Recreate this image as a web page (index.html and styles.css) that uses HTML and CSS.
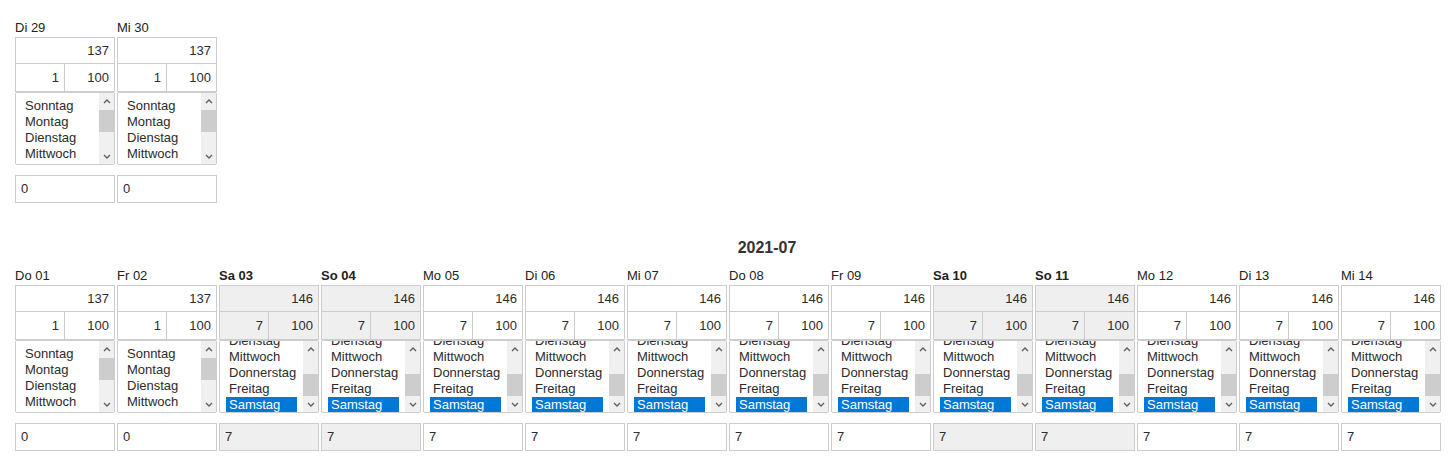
FILE: index.html
```html
<!DOCTYPE html>
<html>
<head>
  <title>Kontingente</title>
  <meta charset="UTF-8">
  <link rel="stylesheet" href="styles.css">
</head>
<body>
  <div class="days">
    <div class="day">
      <div class="day-label">Di 29</div>
      <div class="quota">
        <div class="q-total">137</div>
        <div class="q-cell">1</div>
        <div class="q-cell">100</div>
      </div>
      <div class="listbox">
        <div class="options">
          <div class="option">Sonntag</div>
          <div class="option">Montag</div>
          <div class="option">Dienstag</div>
          <div class="option">Mittwoch</div>
          <div class="option">Donnerstag</div>
          <div class="option">Freitag</div>
          <div class="option">Samstag</div>
        </div>
        <div class="scrollbar">
          <div class="arrow"><svg width="8" height="6" viewBox="0 0 8 6"><polyline points="1,5 4,2 7,5"/></svg></div>
          <div class="thumb"></div>
          <div class="arrow down"><svg width="8" height="6" viewBox="0 0 8 6"><polyline points="1,1 4,4 7,1"/></svg></div>
        </div>
      </div>
      <div class="field">0</div>
    </div>
    <div class="day">
      <div class="day-label">Mi 30</div>
      <div class="quota">
        <div class="q-total">137</div>
        <div class="q-cell">1</div>
        <div class="q-cell">100</div>
      </div>
      <div class="listbox">
        <div class="options">
          <div class="option">Sonntag</div>
          <div class="option">Montag</div>
          <div class="option">Dienstag</div>
          <div class="option">Mittwoch</div>
          <div class="option">Donnerstag</div>
          <div class="option">Freitag</div>
          <div class="option">Samstag</div>
        </div>
        <div class="scrollbar">
          <div class="arrow"><svg width="8" height="6" viewBox="0 0 8 6"><polyline points="1,5 4,2 7,5"/></svg></div>
          <div class="thumb"></div>
          <div class="arrow down"><svg width="8" height="6" viewBox="0 0 8 6"><polyline points="1,1 4,4 7,1"/></svg></div>
        </div>
      </div>
      <div class="field">0</div>
    </div>
  </div>

  <div class="month-title">2021-07</div>

  <div class="days">
    <div class="day">
      <div class="day-label">Do 01</div>
      <div class="quota">
        <div class="q-total">137</div>
        <div class="q-cell">1</div>
        <div class="q-cell">100</div>
      </div>
      <div class="listbox">
        <div class="options">
          <div class="option">Sonntag</div>
          <div class="option">Montag</div>
          <div class="option">Dienstag</div>
          <div class="option">Mittwoch</div>
          <div class="option">Donnerstag</div>
          <div class="option">Freitag</div>
          <div class="option">Samstag</div>
        </div>
        <div class="scrollbar">
          <div class="arrow"><svg width="8" height="6" viewBox="0 0 8 6"><polyline points="1,5 4,2 7,5"/></svg></div>
          <div class="thumb"></div>
          <div class="arrow down"><svg width="8" height="6" viewBox="0 0 8 6"><polyline points="1,1 4,4 7,1"/></svg></div>
        </div>
      </div>
      <div class="field">0</div>
    </div>
    <div class="day">
      <div class="day-label">Fr 02</div>
      <div class="quota">
        <div class="q-total">137</div>
        <div class="q-cell">1</div>
        <div class="q-cell">100</div>
      </div>
      <div class="listbox">
        <div class="options">
          <div class="option">Sonntag</div>
          <div class="option">Montag</div>
          <div class="option">Dienstag</div>
          <div class="option">Mittwoch</div>
          <div class="option">Donnerstag</div>
          <div class="option">Freitag</div>
          <div class="option">Samstag</div>
        </div>
        <div class="scrollbar">
          <div class="arrow"><svg width="8" height="6" viewBox="0 0 8 6"><polyline points="1,5 4,2 7,5"/></svg></div>
          <div class="thumb"></div>
          <div class="arrow down"><svg width="8" height="6" viewBox="0 0 8 6"><polyline points="1,1 4,4 7,1"/></svg></div>
        </div>
      </div>
      <div class="field">0</div>
    </div>
    <div class="day weekend">
      <div class="day-label">Sa 03</div>
      <div class="quota">
        <div class="q-total">146</div>
        <div class="q-cell">7</div>
        <div class="q-cell">100</div>
      </div>
      <div class="listbox scrolled">
        <div class="options">
          <div class="option">Sonntag</div>
          <div class="option">Montag</div>
          <div class="option">Dienstag</div>
          <div class="option">Mittwoch</div>
          <div class="option">Donnerstag</div>
          <div class="option">Freitag</div>
          <div class="option selected">Samstag</div>
        </div>
        <div class="scrollbar">
          <div class="arrow"><svg width="8" height="6" viewBox="0 0 8 6"><polyline points="1,5 4,2 7,5"/></svg></div>
          <div class="thumb"></div>
          <div class="arrow down"><svg width="8" height="6" viewBox="0 0 8 6"><polyline points="1,1 4,4 7,1"/></svg></div>
        </div>
      </div>
      <div class="field">7</div>
    </div>
    <div class="day weekend">
      <div class="day-label">So 04</div>
      <div class="quota">
        <div class="q-total">146</div>
        <div class="q-cell">7</div>
        <div class="q-cell">100</div>
      </div>
      <div class="listbox scrolled">
        <div class="options">
          <div class="option">Sonntag</div>
          <div class="option">Montag</div>
          <div class="option">Dienstag</div>
          <div class="option">Mittwoch</div>
          <div class="option">Donnerstag</div>
          <div class="option">Freitag</div>
          <div class="option selected">Samstag</div>
        </div>
        <div class="scrollbar">
          <div class="arrow"><svg width="8" height="6" viewBox="0 0 8 6"><polyline points="1,5 4,2 7,5"/></svg></div>
          <div class="thumb"></div>
          <div class="arrow down"><svg width="8" height="6" viewBox="0 0 8 6"><polyline points="1,1 4,4 7,1"/></svg></div>
        </div>
      </div>
      <div class="field">7</div>
    </div>
    <div class="day">
      <div class="day-label">Mo 05</div>
      <div class="quota">
        <div class="q-total">146</div>
        <div class="q-cell">7</div>
        <div class="q-cell">100</div>
      </div>
      <div class="listbox scrolled">
        <div class="options">
          <div class="option">Sonntag</div>
          <div class="option">Montag</div>
          <div class="option">Dienstag</div>
          <div class="option">Mittwoch</div>
          <div class="option">Donnerstag</div>
          <div class="option">Freitag</div>
          <div class="option selected">Samstag</div>
        </div>
        <div class="scrollbar">
          <div class="arrow"><svg width="8" height="6" viewBox="0 0 8 6"><polyline points="1,5 4,2 7,5"/></svg></div>
          <div class="thumb"></div>
          <div class="arrow down"><svg width="8" height="6" viewBox="0 0 8 6"><polyline points="1,1 4,4 7,1"/></svg></div>
        </div>
      </div>
      <div class="field">7</div>
    </div>
    <div class="day">
      <div class="day-label">Di 06</div>
      <div class="quota">
        <div class="q-total">146</div>
        <div class="q-cell">7</div>
        <div class="q-cell">100</div>
      </div>
      <div class="listbox scrolled">
        <div class="options">
          <div class="option">Sonntag</div>
          <div class="option">Montag</div>
          <div class="option">Dienstag</div>
          <div class="option">Mittwoch</div>
          <div class="option">Donnerstag</div>
          <div class="option">Freitag</div>
          <div class="option selected">Samstag</div>
        </div>
        <div class="scrollbar">
          <div class="arrow"><svg width="8" height="6" viewBox="0 0 8 6"><polyline points="1,5 4,2 7,5"/></svg></div>
          <div class="thumb"></div>
          <div class="arrow down"><svg width="8" height="6" viewBox="0 0 8 6"><polyline points="1,1 4,4 7,1"/></svg></div>
        </div>
      </div>
      <div class="field">7</div>
    </div>
    <div class="day">
      <div class="day-label">Mi 07</div>
      <div class="quota">
        <div class="q-total">146</div>
        <div class="q-cell">7</div>
        <div class="q-cell">100</div>
      </div>
      <div class="listbox scrolled">
        <div class="options">
          <div class="option">Sonntag</div>
          <div class="option">Montag</div>
          <div class="option">Dienstag</div>
          <div class="option">Mittwoch</div>
          <div class="option">Donnerstag</div>
          <div class="option">Freitag</div>
          <div class="option selected">Samstag</div>
        </div>
        <div class="scrollbar">
          <div class="arrow"><svg width="8" height="6" viewBox="0 0 8 6"><polyline points="1,5 4,2 7,5"/></svg></div>
          <div class="thumb"></div>
          <div class="arrow down"><svg width="8" height="6" viewBox="0 0 8 6"><polyline points="1,1 4,4 7,1"/></svg></div>
        </div>
      </div>
      <div class="field">7</div>
    </div>
    <div class="day">
      <div class="day-label">Do 08</div>
      <div class="quota">
        <div class="q-total">146</div>
        <div class="q-cell">7</div>
        <div class="q-cell">100</div>
      </div>
      <div class="listbox scrolled">
        <div class="options">
          <div class="option">Sonntag</div>
          <div class="option">Montag</div>
          <div class="option">Dienstag</div>
          <div class="option">Mittwoch</div>
          <div class="option">Donnerstag</div>
          <div class="option">Freitag</div>
          <div class="option selected">Samstag</div>
        </div>
        <div class="scrollbar">
          <div class="arrow"><svg width="8" height="6" viewBox="0 0 8 6"><polyline points="1,5 4,2 7,5"/></svg></div>
          <div class="thumb"></div>
          <div class="arrow down"><svg width="8" height="6" viewBox="0 0 8 6"><polyline points="1,1 4,4 7,1"/></svg></div>
        </div>
      </div>
      <div class="field">7</div>
    </div>
    <div class="day">
      <div class="day-label">Fr 09</div>
      <div class="quota">
        <div class="q-total">146</div>
        <div class="q-cell">7</div>
        <div class="q-cell">100</div>
      </div>
      <div class="listbox scrolled">
        <div class="options">
          <div class="option">Sonntag</div>
          <div class="option">Montag</div>
          <div class="option">Dienstag</div>
          <div class="option">Mittwoch</div>
          <div class="option">Donnerstag</div>
          <div class="option">Freitag</div>
          <div class="option selected">Samstag</div>
        </div>
        <div class="scrollbar">
          <div class="arrow"><svg width="8" height="6" viewBox="0 0 8 6"><polyline points="1,5 4,2 7,5"/></svg></div>
          <div class="thumb"></div>
          <div class="arrow down"><svg width="8" height="6" viewBox="0 0 8 6"><polyline points="1,1 4,4 7,1"/></svg></div>
        </div>
      </div>
      <div class="field">7</div>
    </div>
    <div class="day weekend">
      <div class="day-label">Sa 10</div>
      <div class="quota">
        <div class="q-total">146</div>
        <div class="q-cell">7</div>
        <div class="q-cell">100</div>
      </div>
      <div class="listbox scrolled">
        <div class="options">
          <div class="option">Sonntag</div>
          <div class="option">Montag</div>
          <div class="option">Dienstag</div>
          <div class="option">Mittwoch</div>
          <div class="option">Donnerstag</div>
          <div class="option">Freitag</div>
          <div class="option selected">Samstag</div>
        </div>
        <div class="scrollbar">
          <div class="arrow"><svg width="8" height="6" viewBox="0 0 8 6"><polyline points="1,5 4,2 7,5"/></svg></div>
          <div class="thumb"></div>
          <div class="arrow down"><svg width="8" height="6" viewBox="0 0 8 6"><polyline points="1,1 4,4 7,1"/></svg></div>
        </div>
      </div>
      <div class="field">7</div>
    </div>
    <div class="day weekend">
      <div class="day-label">So 11</div>
      <div class="quota">
        <div class="q-total">146</div>
        <div class="q-cell">7</div>
        <div class="q-cell">100</div>
      </div>
      <div class="listbox scrolled">
        <div class="options">
          <div class="option">Sonntag</div>
          <div class="option">Montag</div>
          <div class="option">Dienstag</div>
          <div class="option">Mittwoch</div>
          <div class="option">Donnerstag</div>
          <div class="option">Freitag</div>
          <div class="option selected">Samstag</div>
        </div>
        <div class="scrollbar">
          <div class="arrow"><svg width="8" height="6" viewBox="0 0 8 6"><polyline points="1,5 4,2 7,5"/></svg></div>
          <div class="thumb"></div>
          <div class="arrow down"><svg width="8" height="6" viewBox="0 0 8 6"><polyline points="1,1 4,4 7,1"/></svg></div>
        </div>
      </div>
      <div class="field">7</div>
    </div>
    <div class="day">
      <div class="day-label">Mo 12</div>
      <div class="quota">
        <div class="q-total">146</div>
        <div class="q-cell">7</div>
        <div class="q-cell">100</div>
      </div>
      <div class="listbox scrolled">
        <div class="options">
          <div class="option">Sonntag</div>
          <div class="option">Montag</div>
          <div class="option">Dienstag</div>
          <div class="option">Mittwoch</div>
          <div class="option">Donnerstag</div>
          <div class="option">Freitag</div>
          <div class="option selected">Samstag</div>
        </div>
        <div class="scrollbar">
          <div class="arrow"><svg width="8" height="6" viewBox="0 0 8 6"><polyline points="1,5 4,2 7,5"/></svg></div>
          <div class="thumb"></div>
          <div class="arrow down"><svg width="8" height="6" viewBox="0 0 8 6"><polyline points="1,1 4,4 7,1"/></svg></div>
        </div>
      </div>
      <div class="field">7</div>
    </div>
    <div class="day">
      <div class="day-label">Di 13</div>
      <div class="quota">
        <div class="q-total">146</div>
        <div class="q-cell">7</div>
        <div class="q-cell">100</div>
      </div>
      <div class="listbox scrolled">
        <div class="options">
          <div class="option">Sonntag</div>
          <div class="option">Montag</div>
          <div class="option">Dienstag</div>
          <div class="option">Mittwoch</div>
          <div class="option">Donnerstag</div>
          <div class="option">Freitag</div>
          <div class="option selected">Samstag</div>
        </div>
        <div class="scrollbar">
          <div class="arrow"><svg width="8" height="6" viewBox="0 0 8 6"><polyline points="1,5 4,2 7,5"/></svg></div>
          <div class="thumb"></div>
          <div class="arrow down"><svg width="8" height="6" viewBox="0 0 8 6"><polyline points="1,1 4,4 7,1"/></svg></div>
        </div>
      </div>
      <div class="field">7</div>
    </div>
    <div class="day">
      <div class="day-label">Mi 14</div>
      <div class="quota">
        <div class="q-total">146</div>
        <div class="q-cell">7</div>
        <div class="q-cell">100</div>
      </div>
      <div class="listbox scrolled">
        <div class="options">
          <div class="option">Sonntag</div>
          <div class="option">Montag</div>
          <div class="option">Dienstag</div>
          <div class="option">Mittwoch</div>
          <div class="option">Donnerstag</div>
          <div class="option">Freitag</div>
          <div class="option selected">Samstag</div>
        </div>
        <div class="scrollbar">
          <div class="arrow"><svg width="8" height="6" viewBox="0 0 8 6"><polyline points="1,5 4,2 7,5"/></svg></div>
          <div class="thumb"></div>
          <div class="arrow down"><svg width="8" height="6" viewBox="0 0 8 6"><polyline points="1,1 4,4 7,1"/></svg></div>
        </div>
      </div>
      <div class="field">7</div>
    </div>
  </div>
</body>
</html>
```

FILE: styles.css
```css
body {
  margin: 0;
  padding: 20px 0 0 15px;
  font-family: "Liberation Sans", Arial, sans-serif;
  font-size: 13px;
  color: #333;
  background: white;
}

.days {
  display: flex;
  gap: 2px;
}

.day {
  width: 100px;
  display: flex;
  flex-direction: column;
}

.day-label {
  height: 16px;
  line-height: 16px;
  margin-bottom: 1px;
  color: #222;
  white-space: nowrap;
}

.weekend .day-label {
  font-weight: bold;
}

.quota {
  display: grid;
  grid-template-columns: 48px 1fr;
  grid-template-rows: 25px 27px;
  gap: 1px;
  border: 1px solid #ccc;
  background: #ccc;
}

.q-total,
.q-cell {
  background: white;
  padding-right: 5px;
  display: flex;
  align-items: center;
  justify-content: flex-end;
  color: #2b2b2b;
}

.q-total {
  grid-column: 1 / 3;
}

.weekend .q-total,
.weekend .q-cell {
  background: #efefef;
}

.listbox {
  display: flex;
  height: 71px;
  border: 1px solid #ccc;
  border-radius: 2px;
  overflow: hidden;
  background: white;
}

.options {
  flex: 1;
  overflow: hidden;
  padding: 0 6px;
}

.option {
  height: 16px;
  line-height: 16px;
  padding-left: 3px;
  white-space: nowrap;
  color: #2b2b2b;
}

.options .option:first-child {
  margin-top: 5px;
}

.scrolled .options .option:first-child {
  margin-top: -40px;
}

.option.selected {
  background: #0078d7;
  color: white;
}

.scrollbar {
  width: 15px;
  display: flex;
  flex-direction: column;
  background: #f0f0f0;
}

.arrow {
  height: 15px;
  display: flex;
  align-items: center;
  justify-content: center;
}

.arrow.down {
  margin-top: auto;
}

.arrow svg polyline {
  fill: none;
  stroke: #606060;
  stroke-width: 1.4;
}

.thumb {
  height: 22px;
  margin-top: 2px;
  background: #cdcdcd;
}

.scrolled .thumb {
  margin-top: 18px;
}

.field {
  margin-top: 10px;
  height: 26px;
  line-height: 26px;
  border: 1px solid #ccc;
  padding-left: 5px;
  color: #2b2b2b;
}

.weekend .field {
  background: #efefef;
}

.month-title {
  margin: 36px 0 11px;
  padding-left: 67px;
  height: 18px;
  line-height: 18px;
  font-size: 16px;
  font-weight: bold;
  text-align: center;
}
```
